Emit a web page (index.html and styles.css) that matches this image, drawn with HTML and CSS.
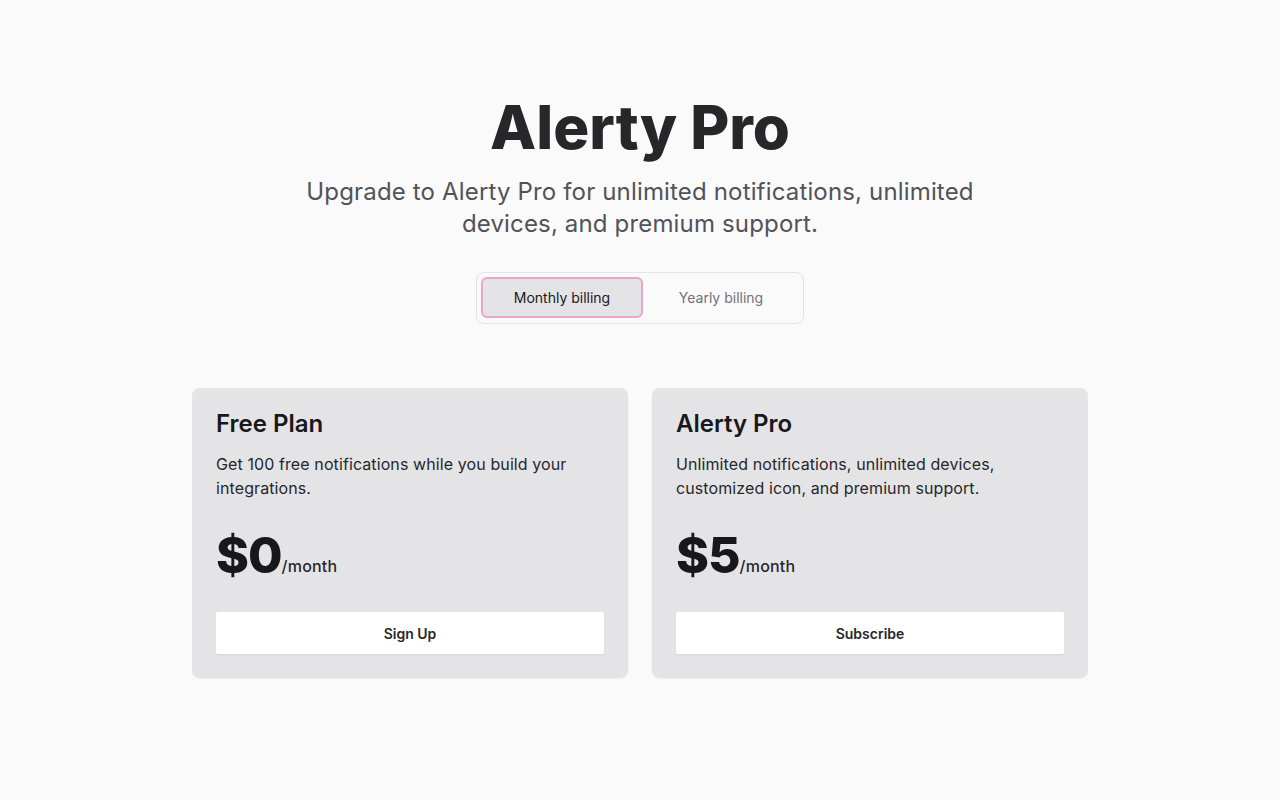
FILE: index.html
```html
<!DOCTYPE html>
<html lang="en">
<head>
<meta charset="utf-8">
<title>Alerty Pro</title>
<link rel="stylesheet" href="styles.css">
</head>
<body>
<main class="page">
  <header class="hero">
    <h1 class="title">Alerty Pro</h1>
    <p class="subtitle">Upgrade to Alerty Pro for unlimited notifications, unlimited devices, and premium support.</p>
    <div class="toggle">
      <button class="toggle-btn active">Monthly billing</button>
      <button class="toggle-btn">Yearly billing</button>
    </div>
  </header>
  <section class="plans">
    <div class="card">
      <h2 class="card-title">Free Plan</h2>
      <p class="card-desc">Get 100 free notifications while you build your integrations.</p>
      <p class="price"><span class="amount">$0</span><span class="per">/month</span></p>
      <button class="cta">Sign Up</button>
    </div>
    <div class="card">
      <h2 class="card-title">Alerty Pro</h2>
      <p class="card-desc">Unlimited notifications, unlimited devices, customized icon, and premium support.</p>
      <p class="price"><span class="amount">$5</span><span class="per">/month</span></p>
      <button class="cta">Subscribe</button>
    </div>
  </section>
</main>
</body>
</html>
```
FILE: styles.css
```css
* { box-sizing: border-box; }
html, body { margin: 0; padding: 0; }
body {
  background: #fafafa;
  font-family: Inter, "Noto Sans", sans-serif;
  color: #18181b;
  min-height: 800px;
}
.page {
  padding-top: 92px;
  display: flex;
  flex-direction: column;
  align-items: center;
}
.hero {
  display: flex;
  flex-direction: column;
  align-items: center;
  text-align: center;
}
.title {
  margin: 0;
  font-size: 60px;
  line-height: 70px;
  font-weight: 800;
  letter-spacing: 0;
  color: #27272a;
}
.subtitle {
  margin: 14px 0 0;
  max-width: 680px;
  font-size: 24px;
  line-height: 32px;
  letter-spacing: 0.16px;
  color: #52525b;
}
.toggle {
  margin-top: 32px;
  display: flex;
  padding: 4px 4px 5px;
  border: 1px solid #e4e4e7;
  border-radius: 8px;
  background: #fafafa;
}
.toggle-btn {
  width: 156px;
  height: 41px;
  border: 2px solid transparent;
  border-radius: 6px;
  background: transparent;
  font-family: inherit;
  font-size: 14px;
  font-weight: 400;
  color: #71717a;
}
.toggle-btn.active {
  background: #e4e4e7;
  border-color: #eaa5c8;
  color: #18181b;
  width: 162px;
}
.plans {
  margin-top: 64px;
  width: 896px;
  display: grid;
  grid-template-columns: 1fr 1fr;
  gap: 24px;
}
.card {
  background: #e4e4e7;
  border-radius: 8px;
  padding: 24px;
  box-shadow: 0 1px 2px rgba(0,0,0,0.06);
}
.card-title {
  margin: 0;
  font-size: 24px;
  line-height: 24px;
  font-weight: 600;
  color: #18181b;
}
.card-desc {
  margin: 16px 0 0;
  font-size: 16px;
  line-height: 24px;
  letter-spacing: 0.1px;
  color: #27272a;
}
.price {
  margin: 27px 0 0;
  display: flex;
  align-items: baseline;
}
.amount {
  font-size: 50px;
  line-height: 56px;
  font-weight: 800;
  letter-spacing: -1px;
  color: #18181b;
}
.per {
  font-size: 16px;
  font-weight: 500;
  letter-spacing: 0.2px;
  color: #27272a;
  position: relative;
  top: -1px;
}
.cta {
  margin-top: 29px;
  width: 100%;
  height: 42px;
  border: none;
  border-radius: 2px;
  background: #ffffff;
  font-family: inherit;
  font-size: 14px;
  font-weight: 600;
  color: #27272a;
  box-shadow: 0 1px 2px rgba(0,0,0,0.05);
}
```
